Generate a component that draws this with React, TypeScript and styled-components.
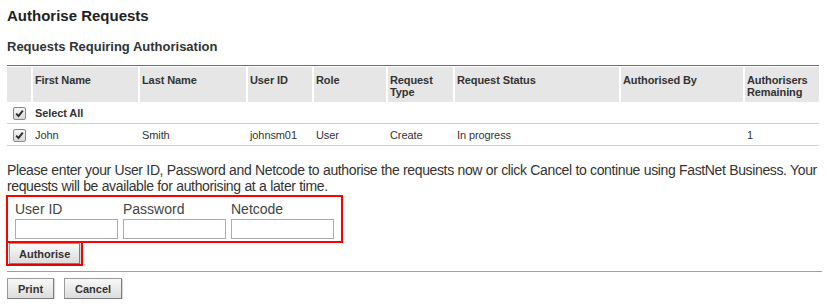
import styled, {createGlobalStyle} from "styled-components";

const GlobalStyle = createGlobalStyle`
    html, body {
        margin: 0;
        padding: 0;
        background: #ffffff;
    }
    body {
        font-family: "Liberation Sans", Arial, sans-serif;
        color: #333333;
    }
`

type Request = {
    firstName: string,
    lastName: string,
    userId: string,
    role: string,
    requestType: string,
    status: string,
    authorisedBy: string,
    remaining: string,
}

const requests: Array<Request> = [
    {
        firstName: "John",
        lastName: "Smith",
        userId: "johnsm01",
        role: "User",
        requestType: "Create",
        status: "In progress",
        authorisedBy: "",
        remaining: "1",
    },
]

const columnWidths = [24, 107, 108, 66, 74, 67, 166, 124, 76]

const CheckMark = ({checked}: {checked: boolean}) => (
    <StyledCheck role="checkbox" aria-checked={checked}>
        {checked && (
            <svg width="9" height="9" viewBox="0 0 9 9" aria-hidden={true}>
                <path d="M1.2 4.6 L3.5 7 L7.8 1.6" fill="none" stroke="#2b2b2b" strokeWidth="1.9"/>
            </svg>
        )}
    </StyledCheck>
)

const Field = ({label}: {label: string}) => (
    <StyledField>
        <span>{label}</span>
        <StyledInput type={label === "User ID" ? "text" : "password"}/>
    </StyledField>
)

export default function App() {
    return (
        <StyledPage>
            <GlobalStyle/>
            <StyledTitle>Authorise Requests</StyledTitle>
            <StyledSubtitle>Requests Requiring Authorisation</StyledSubtitle>

            <StyledTable>
                <colgroup>
                    {columnWidths.map((w, i) => <col key={i} style={{width: w}}/>)}
                </colgroup>
                <thead>
                <tr>
                    <th className="first"></th>
                    <th>First Name</th>
                    <th>Last Name</th>
                    <th>User ID</th>
                    <th>Role</th>
                    <th>Request<br/>Type</th>
                    <th>Request Status</th>
                    <th>Authorised By</th>
                    <th>Authorisers<br/>Remaining</th>
                </tr>
                </thead>
                <tbody>
                <tr>
                    <td className="check"><CheckMark checked={true}/></td>
                    <td colSpan={8} className="bold">Select All</td>
                </tr>
                {requests.map((r) => (
                    <tr key={r.userId}>
                        <td className="check"><CheckMark checked={true}/></td>
                        <td>{r.firstName}</td>
                        <td>{r.lastName}</td>
                        <td>{r.userId}</td>
                        <td>{r.role}</td>
                        <td>{r.requestType}</td>
                        <td>{r.status}</td>
                        <td>{r.authorisedBy}</td>
                        <td>{r.remaining}</td>
                    </tr>
                ))}
                </tbody>
            </StyledTable>

            <StyledText>
                Please enter your User ID, Password and Netcode to authorise the requests now or click Cancel to continue using FastNet Business. Your<br/>
                requests will be available for authorising at a later time.
            </StyledText>

            <StyledCredentials>
                <Field label="User ID"/>
                <Field label="Password"/>
                <Field label="Netcode"/>
            </StyledCredentials>
            <StyledHighlight>
                <StyledButton $wide>Authorise</StyledButton>
            </StyledHighlight>

            <StyledRule/>

            <StyledActions>
                <StyledButton>Print</StyledButton>
                <StyledButton>Cancel</StyledButton>
            </StyledActions>
        </StyledPage>
    );
}

const StyledPage = styled.div`
    width: 815px;
    padding: 7px 7px 0;
`

const StyledTitle = styled.h1`
    margin: 0;
    font-size: 15px;
    line-height: 18px;
    font-weight: 700;
    color: #222222;
`

const StyledSubtitle = styled.h2`
    margin: 14px 0 0;
    font-size: 13px;
    line-height: 16px;
    font-weight: 700;
    color: #333333;
`

const StyledTable = styled.table`
    margin-top: 10px;
    width: 812px;
    table-layout: fixed;
    border-collapse: separate;
    border-spacing: 0;
    border-top: 1px solid #6e6e6e;
    font-size: 11px;
    line-height: 12px;
    letter-spacing: -0.1px;
    color: #333333;

    th {
        background: #e6e6e6;
        border-top: 1px solid #ffffff;
        border-left: 2px solid #ffffff;
        padding: 7px 2px 4px 2px;
        height: 23px;
        text-align: left;
        vertical-align: top;
        font-weight: 700;
    }

    th.first {
        border-left: none;
    }

    td {
        height: 21px;
        padding: 0 4px;
        border-bottom: 1px solid #cfcfcf;
        vertical-align: middle;
        white-space: nowrap;
    }

    td.check {
        padding: 0;
        text-align: center;
    }

    td.bold {
        font-weight: 700;
    }
`

const StyledCheck = styled.span`
    display: inline-flex;
    align-items: center;
    justify-content: center;
    box-sizing: border-box;
    width: 13px;
    height: 13px;
    margin-top: 1px;
    vertical-align: middle;
    border: 1px solid #8a8a8a;
    border-radius: 2px;
    background: linear-gradient(#f7f7f7, #d9d9d9);
`

const StyledText = styled.p`
    margin: 16px 0 0;
    font-size: 14px;
    line-height: 16px;
    letter-spacing: -0.37px;
    word-spacing: 0.2px;
    color: #333333;
    white-space: nowrap;
`

const StyledCredentials = styled.div`
    display: flex;
    gap: 5px;
    width: 337px;
    box-sizing: border-box;
    margin: 1px 0 0 -1px;
    padding: 4px 7px 2px 7px;
    border: 2px solid #ff0000;
`

const StyledField = styled.label`
    display: flex;
    flex-direction: column;
    gap: 2px;
    width: 103px;
    font-size: 14px;
    line-height: 16px;
    color: #444444;
`

const StyledInput = styled.input`
    box-sizing: border-box;
    width: 103px;
    height: 20px;
    margin: 0;
    border: 1px solid #ababab;
    background: #ffffff;
    outline: none;
`

const StyledHighlight = styled.div`
    display: inline-flex;
    margin: -2px 0 0 -1px;
    padding: 0 1px;
    border: 2px solid #ff0000;
`

const StyledButton = styled.button<{ $wide?: boolean }>`
    box-sizing: border-box;
    height: 21px;
    margin: 0;
    padding: 0 ${props => props.$wide ? "9px" : "10px"};
    border: 1px solid #9a9a9a;
    border-right-color: #7d7d7d;
    border-bottom-color: #7d7d7d;
    border-radius: 0;
    background: linear-gradient(#f9f9f9, #dcdcdc);
    box-shadow: 1px 1px 1px rgba(0, 0, 0, 0.15);
    font-family: "Liberation Sans", Arial, sans-serif;
    font-size: 11px;
    font-weight: 700;
    color: #333333;
`

const StyledRule = styled.hr`
    margin: 5px 0 0;
    border: none;
    border-top: 1px solid #a0a0a0;
    height: 0;
`

const StyledActions = styled.div`
    display: flex;
    gap: 10px;
    margin-top: 6px;
`
